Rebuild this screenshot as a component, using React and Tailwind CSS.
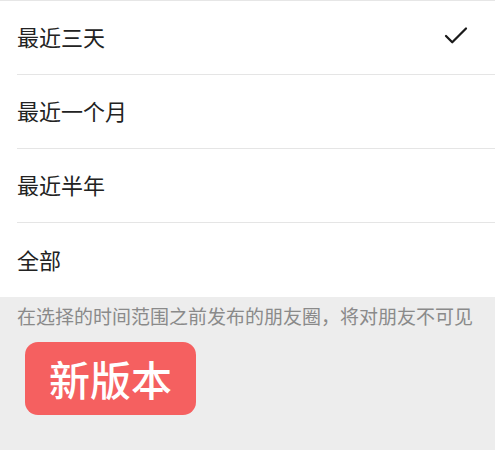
import { Check } from "lucide-react";

const options = [
  { label: "最近三天", checked: true },
  { label: "最近一个月" },
  { label: "最近半年" },
  { label: "全部", last: true },
];

export default function App() {
  return (
    <div
      className="w-[495px] h-[450px] bg-[#ededed] overflow-hidden"
      style={{ fontFamily: '"Noto Sans CJK SC", "Noto Sans", sans-serif' }}
    >
      <div className="bg-white border-t border-[#e6e6e6]">
        {options.map((o) => (
          <div key={o.label} className="pl-[17px]">
            <div
              className={
                "h-[74px] pb-[3px] flex items-center justify-between pr-[24px] " +
                (o.last ? "" : "border-b border-[#e5e5e5]")
              }
            >
              <span className="text-[22px] text-[#222] leading-none">{o.label}</span>
              {o.checked && (
                <Check className="w-[30px] h-[30px] text-[#1a1a1a]" strokeWidth={1.8} />
              )}
            </div>
          </div>
        ))}
      </div>
      <p className="pl-[17px] pt-[6px] text-[19px] leading-[26px] text-[#8a8a8a] whitespace-nowrap">
        在选择的时间范围之前发布的朋友圈，将对朋友不可见
      </p>
      <div className="pl-[25px] pt-[13px]">
        <div className="w-[171px] h-[73px] rounded-[13px] bg-[#f56060] flex items-center justify-center">
          <span className="text-[41px] font-medium text-white leading-none">新版本</span>
        </div>
      </div>
    </div>
  );
}
